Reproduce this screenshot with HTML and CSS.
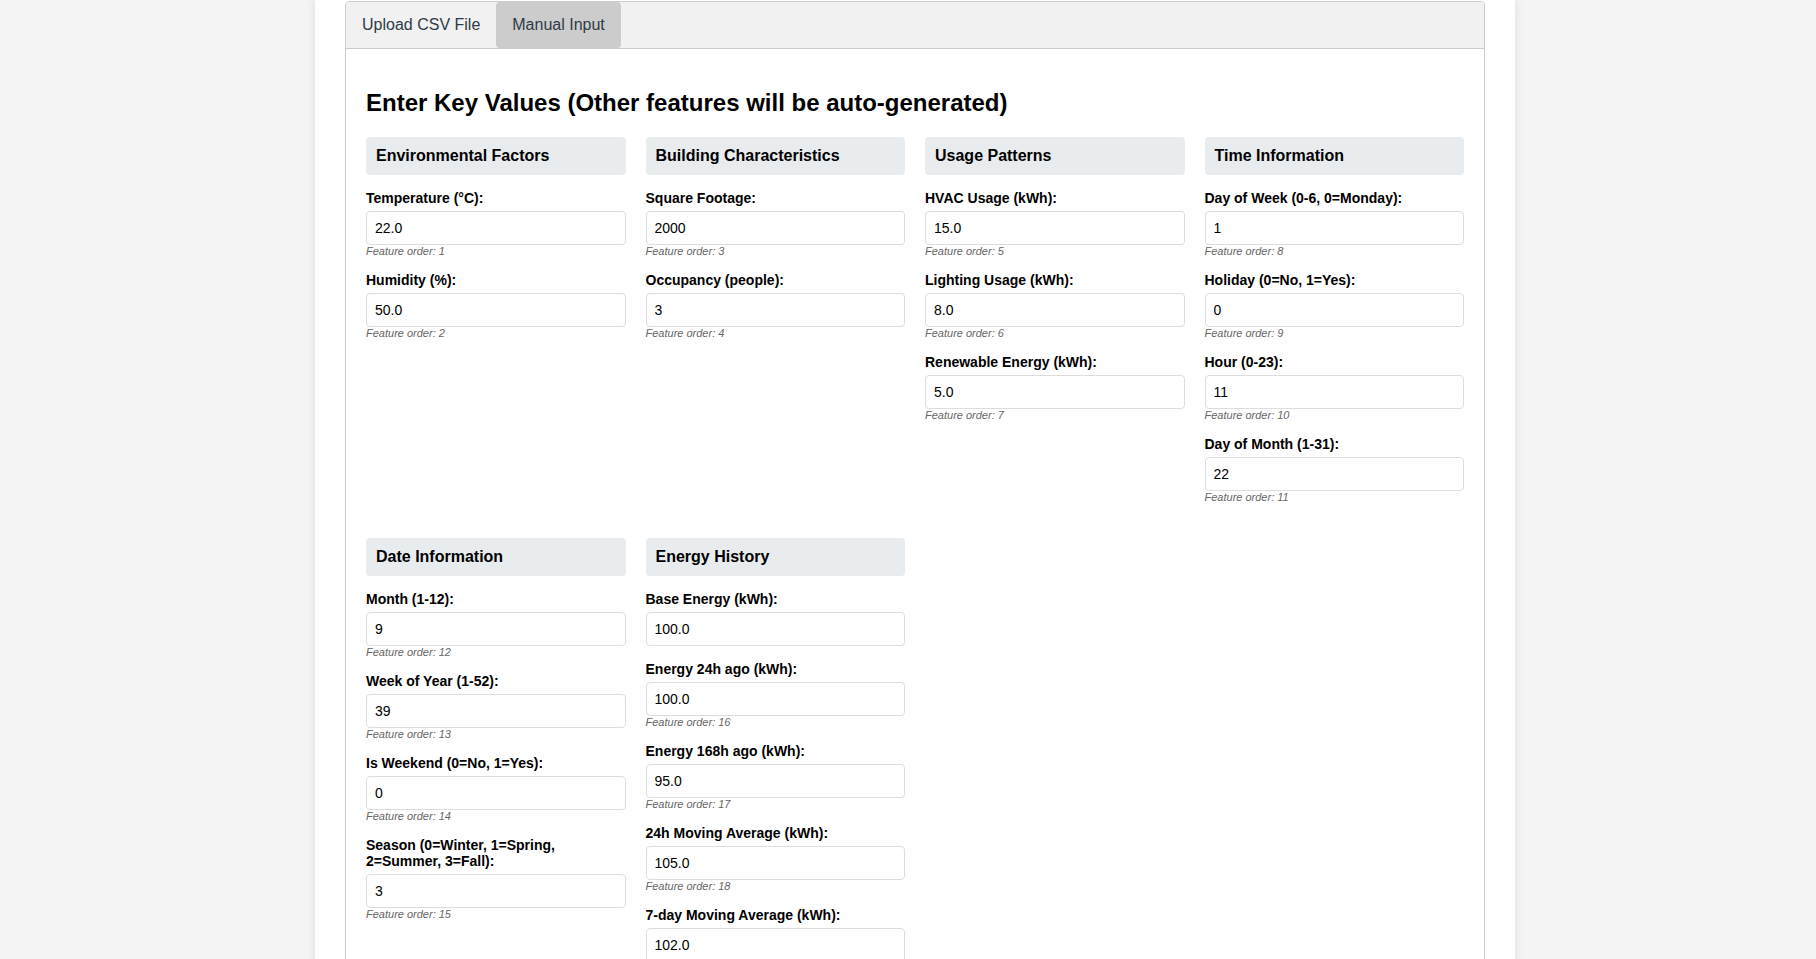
FILE: index.html
```html
<!DOCTYPE html>
<html lang="en">
<head>
<meta charset="utf-8">
<title>Energy Prediction - Manual Input</title>
<link rel="stylesheet" href="styles.css">
</head>
<body>
<div class="container">
  <div class="tabs">
    <div class="tab-header">
      <button class="tab-btn">Upload CSV File</button>
      <button class="tab-btn active">Manual Input</button>
    </div>
    <div class="tab-content">
      <h2 class="page-title">Enter Key Values (Other features will be auto-generated)</h2>
      <div class="grid">
        <div class="group">
          <h3 class="group-title">Environmental Factors</h3>
          <div class="field"><label>Temperature (°C):</label><input type="text" value="22.0"><small>Feature order: 1</small></div>
          <div class="field"><label>Humidity (%):</label><input type="text" value="50.0"><small>Feature order: 2</small></div>
        </div>
        <div class="group">
          <h3 class="group-title">Building Characteristics</h3>
          <div class="field"><label>Square Footage:</label><input type="text" value="2000"><small>Feature order: 3</small></div>
          <div class="field"><label>Occupancy (people):</label><input type="text" value="3"><small>Feature order: 4</small></div>
        </div>
        <div class="group">
          <h3 class="group-title">Usage Patterns</h3>
          <div class="field"><label>HVAC Usage (kWh):</label><input type="text" value="15.0"><small>Feature order: 5</small></div>
          <div class="field"><label>Lighting Usage (kWh):</label><input type="text" value="8.0"><small>Feature order: 6</small></div>
          <div class="field"><label>Renewable Energy (kWh):</label><input type="text" value="5.0"><small>Feature order: 7</small></div>
        </div>
        <div class="group">
          <h3 class="group-title">Time Information</h3>
          <div class="field"><label>Day of Week (0-6, 0=Monday):</label><input type="text" value="1"><small>Feature order: 8</small></div>
          <div class="field"><label>Holiday (0=No, 1=Yes):</label><input type="text" value="0"><small>Feature order: 9</small></div>
          <div class="field"><label>Hour (0-23):</label><input type="text" value="11"><small>Feature order: 10</small></div>
          <div class="field"><label>Day of Month (1-31):</label><input type="text" value="22"><small>Feature order: 11</small></div>
        </div>
        <div class="group">
          <h3 class="group-title">Date Information</h3>
          <div class="field"><label>Month (1-12):</label><input type="text" value="9"><small>Feature order: 12</small></div>
          <div class="field"><label>Week of Year (1-52):</label><input type="text" value="39"><small>Feature order: 13</small></div>
          <div class="field"><label>Is Weekend (0=No, 1=Yes):</label><input type="text" value="0"><small>Feature order: 14</small></div>
          <div class="field"><label>Season (0=Winter, 1=Spring, 2=Summer, 3=Fall):</label><input type="text" value="3"><small>Feature order: 15</small></div>
        </div>
        <div class="group">
          <h3 class="group-title">Energy History</h3>
          <div class="field"><label>Base Energy (kWh):</label><input type="text" value="100.0"></div>
          <div class="field"><label>Energy 24h ago (kWh):</label><input type="text" value="100.0"><small>Feature order: 16</small></div>
          <div class="field"><label>Energy 168h ago (kWh):</label><input type="text" value="95.0"><small>Feature order: 17</small></div>
          <div class="field"><label>24h Moving Average (kWh):</label><input type="text" value="105.0"><small>Feature order: 18</small></div>
          <div class="field"><label>7-day Moving Average (kWh):</label><input type="text" value="102.0"><small>Feature order: 19</small></div>
        </div>
      </div>
    </div>
  </div>
</div>
</body>
</html>
```

FILE: styles.css
```css
html {
  overflow: hidden;
}

body {
  margin: 0;
  padding: 0 0 0 14px;
  background: #f4f4f4;
  font-family: "Liberation Sans", Arial, sans-serif;
  color: #222;
}

.container {
  max-width: 1200px;
  margin: 0 auto;
  min-height: 100vh;
  box-sizing: border-box;
  background: #fff;
  padding: 1px 30px 30px;
  box-shadow: 0 0 10px rgba(0, 0, 0, 0.1);
}

.tabs {
  border: 1px solid #ccc;
  border-radius: 4px;
  overflow: hidden;
}

.tab-header {
  display: flex;
  background: #f1f1f1;
  border-bottom: 1px solid #ccc;
}

.tab-btn {
  border: none;
  background: transparent;
  padding: 14px 16px;
  font-family: "Liberation Sans", Arial, sans-serif;
  font-size: 16px;
  line-height: normal;
  color: #2f3b48;
  border-radius: 4px;
  cursor: pointer;
}

.tab-btn.active {
  background: #ccc;
}

.tab-content {
  padding: 20px;
}

.page-title {
  font-size: 24px;
  font-weight: bold;
  margin: 20px 0 20px;
  color: #000;
}

.grid {
  display: grid;
  grid-template-columns: repeat(4, 1fr);
  gap: 20px;
  align-items: start;
}

.group-title {
  margin: 0 0 15px;
  padding: 10px;
  font-size: 16px;
  font-weight: bold;
  background: #e9ecef;
  border-radius: 4px;
  color: #000;
}

.field {
  margin-bottom: 15px;
}

.field label {
  display: block;
  font-size: 14px;
  font-weight: bold;
  margin-bottom: 5px;
  color: #000;
}

.field input {
  display: block;
  width: 100%;
  height: 34px;
  box-sizing: border-box;
  padding: 0 8px;
  border: 1px solid #ddd;
  border-radius: 4px;
  font-family: "Liberation Sans", Arial, sans-serif;
  font-size: 14px;
  color: #000;
  background: #fff;
}

.field small {
  display: block;
  font-size: 11px;
  font-style: italic;
  color: #666;
}
```
